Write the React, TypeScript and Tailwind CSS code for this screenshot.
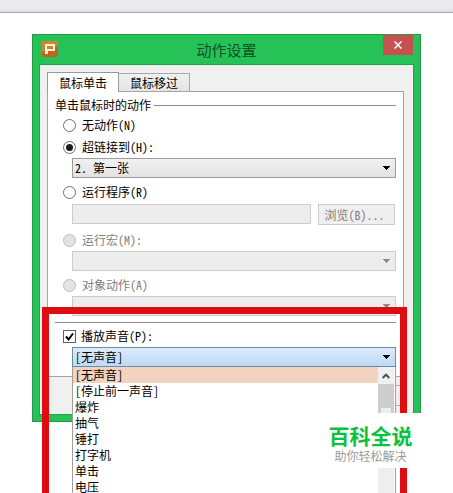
import React from 'react'
import clsx from 'clsx'

const SOUNDS = ['[无声音]', '[停止前一声音]', '爆炸', '抽气', '锤打', '打字机', '单击', '电压']

type TTab = 'click' | 'hover'

interface RadioProps {
  value: string
  label: string
  action: string
  disabled?: boolean
  onChange: (value: string) => void
}

function ActionRadio(props: RadioProps) {
  return (
    <label className={clsx('flex h-5 items-center gap-1.5 pl-2', props.disabled ? 'text-[#7d7d7d]' : 'text-black')}>
      <input
        type="radio"
        name="action"
        value={props.value}
        checked={props.action === props.value}
        disabled={props.disabled}
        onChange={() => props.onChange(props.value)}
        className="grid size-[13px] appearance-none place-items-center rounded-full border border-[#707070] bg-white before:size-[7px] before:rounded-full checked:before:bg-[#1c1c1c] disabled:border-[#bdbdbd] disabled:bg-[#e3e3e3]"
      />
      <span>{props.label}</span>
    </label>
  )
}

interface ComboProps {
  label: string
  options: string[]
  disabled?: boolean
  open?: boolean
}

function Combo(props: ComboProps) {
  return (
    <div className="relative ml-[17px] mt-px">
      <select
        aria-label={props.label}
        disabled={props.disabled}
        className={clsx(
          'block h-5 w-full appearance-none border px-0.5 leading-4 opacity-100 outline-none',
          props.disabled && 'border-[#cccccc] bg-[#ededed]',
          props.open && 'border-[#6c8ba5] bg-linear-to-b from-[#dcecfb] to-[#bddaf4]',
          !props.disabled && !props.open && 'border-[#9c9c9c] bg-linear-to-b from-[#f1f1f1] to-[#e3e3e3]'
        )}
      >
        {props.options.map((option) => (
          <option key={option}>{option}</option>
        ))}
      </select>
      <svg
        viewBox="0 0 8 4"
        shapeRendering="crispEdges"
        className={clsx('pointer-events-none absolute right-1.5 top-2 h-1 w-2', props.disabled ? 'fill-[#8c8c8c]' : 'fill-black')}
      >
        <path d="M0 0h8L4 4z" />
      </svg>
    </div>
  )
}

function SoundList() {
  return (
    <div className="absolute left-[17px] right-0 top-full z-10 flex border border-t-0 border-[#9f9f9f] bg-white">
      <ul role="listbox" aria-label="声音列表" className="h-40 flex-1 overflow-hidden">
        {SOUNDS.map((sound, key) => (
          <li
            key={sound}
            role="option"
            aria-selected={key === 0}
            className={clsx('h-4 px-0.5 leading-4', key === 0 && 'bg-[#f3d2bf]')}
          >
            {sound}
          </li>
        ))}
      </ul>
      <div className="mr-px w-4 bg-[#eeeeee]">
        <button type="button" aria-label="向上滚动" className="grid h-[17px] w-4 place-items-center bg-[#f0f0f0]">
          <svg viewBox="0 0 8 6" className="h-1.5 w-2 fill-none stroke-[#4a4a4a] stroke-2">
            <path d="M.7 5L4 1.6 7.3 5" />
          </svg>
        </button>
        <div className="h-[60px] bg-[#cdcdcd] px-[3px] pt-6">
          <div className="h-1.5 bg-[#eeeeee]" />
        </div>
      </div>
    </div>
  )
}

export default function App() {
  const [tab, setTab] = React.useState<TTab>('click')
  const [action, setAction] = React.useState('link')
  const [playSound, setPlaySound] = React.useState(true)

  return (
    <div className="relative h-screen overflow-hidden bg-white font-['Noto_Sans_Mono_CJK_SC','Noto_Sans_CJK_SC',monospace] text-[12px] leading-5 text-black">
      <div className="h-[13px] border-b border-[#a8a9ae] bg-linear-to-b from-[#e9eaec] from-70% to-[#dcdde0]" />

      <section aria-label="动作设置" className="relative mx-8 mt-[21px] border border-[#249748] bg-[#26c257] px-[7px] pb-[7px]">
        <header className="grid h-[30px] grid-cols-[30px_1fr_30px]">
          <svg viewBox="0 0 16 16" className="ml-0.5 mt-1.5 size-4">
            <rect width="16" height="16" rx="1" fill="#c0661a" />
            <path d="M0 0h16v5L0 11z" fill="#cf8430" />
            <path fillRule="evenodd" d="M3 3h10v7H6v3H3zM5 5v3h6V5z" fill="#fff3dc" />
          </svg>
          <h1 className="text-center text-[15px] leading-[30px] text-[#0b5322]">动作设置</h1>
          <button type="button" aria-label="关闭" className="grid h-5 place-items-center bg-[#c75050]">
            <svg viewBox="0 0 8 8" className="size-2 stroke-white stroke-[1.5]">
              <path d="M.5.5l7 7M7.5.5l-7 7" />
            </svg>
          </button>
        </header>

        <div className="bg-[#eff0ef] pl-[7px] pr-[9px] pt-[7px] outline outline-[#22a34a]">
          <div role="tablist" className="flex items-end">
            <button
              type="button"
              role="tab"
              aria-selected={tab === 'click'}
              onClick={() => setTab('click')}
              className="relative -mb-px h-5 border border-b-0 border-[#9a9a9a] bg-white px-[11px]"
            >
              鼠标单击
            </button>
            <button
              type="button"
              role="tab"
              aria-selected={tab === 'hover'}
              onClick={() => setTab('hover')}
              className="h-[18px] border border-b-0 border-l-0 border-[#a8a8a8] bg-linear-to-b from-[#f1f1f1] to-[#e4e4e4] px-[11px] leading-[18px]"
            >
              鼠标移过
            </button>
          </div>

          <div role="tabpanel" className="border border-[#a6a3a1] bg-white px-[7px] pb-[9px] pt-[3px]">
            <div className="flex h-5 items-center gap-[3px]">
              <h2>单击鼠标时的动作</h2>
              <hr className="flex-1 border-[#8c8c8c]" />
            </div>

            <ActionRadio value="none" label="无动作(N)" action={action} onChange={setAction} />
            <div className="mt-0.5">
              <ActionRadio value="link" label="超链接到(H):" action={action} onChange={setAction} />
              <Combo label="超链接到" options={['2. 第一张']} />
            </div>
            <div className="mt-1">
              <ActionRadio value="program" label="运行程序(R)" action={action} onChange={setAction} />
              <div className="ml-[17px] mr-px mt-0.5 flex gap-[7px]">
                <input type="text" aria-label="程序路径" disabled className="h-5 min-w-0 flex-1 border border-[#cccccc] bg-[#ededed] px-0.5" />
                <button type="button" disabled className="h-[21px] w-[77px] border border-[#cccccc] bg-[#efefef] pr-1 leading-4 text-[#7d7d7d]">
                  浏览(B)...
                </button>
              </div>
            </div>
            <div className="mt-[5px]">
              <ActionRadio value="macro" label="运行宏(M):" action={action} onChange={setAction} disabled />
              <Combo label="运行宏" options={['']} disabled />
            </div>
            <div className="mt-1">
              <ActionRadio value="object" label="对象动作(A)" action={action} onChange={setAction} disabled />
              <Combo label="对象动作" options={['']} disabled />
            </div>

            <hr className="mt-1.5 border-[#8c8c8c]" />

            <div className="relative mt-[3px]">
              <label className="flex h-5 items-center gap-[5px] pl-2">
                <span className="relative grid size-[13px]">
                  <input
                    type="checkbox"
                    checked={playSound}
                    onChange={(e) => setPlaySound(e.target.checked)}
                    className="size-[13px] appearance-none border border-[#606060] bg-white"
                  />
                  {playSound &&
                    <svg viewBox="0 0 13 13" className="pointer-events-none absolute inset-0 fill-none stroke-black stroke-2">
                      <path d="M3 6.5l2.5 3L10 3.5" />
                    </svg>
                  }
                </span>
                <span>播放声音(P):</span>
              </label>
              <Combo label="播放声音" options={SOUNDS} open />
              <SoundList />
            </div>
          </div>

          <footer className="flex justify-end py-2">
            <button type="button" aria-label="取消" className="h-[21px] w-[75px] border border-[#adadad] bg-[#f0f0f0]" />
          </footer>
        </div>

        {/* highlight frame, runs past the bottom of the page */}
        <div className="pointer-events-none absolute -bottom-24 left-[9px] right-[13px] top-[272px] z-20 border-[7px] border-[#dd0d12]" />
      </section>

      <div className="absolute right-[31px] top-[413px] z-30 flex h-[55px] w-[103px] flex-col items-center bg-white pt-2">
        <p className="text-[21px] font-bold leading-7 text-[#0cc23c]">百科全说</p>
        <p className="text-[12px] leading-[14px] text-[#9a9a9a]">助你轻松解决</p>
      </div>
    </div>
  )
}
